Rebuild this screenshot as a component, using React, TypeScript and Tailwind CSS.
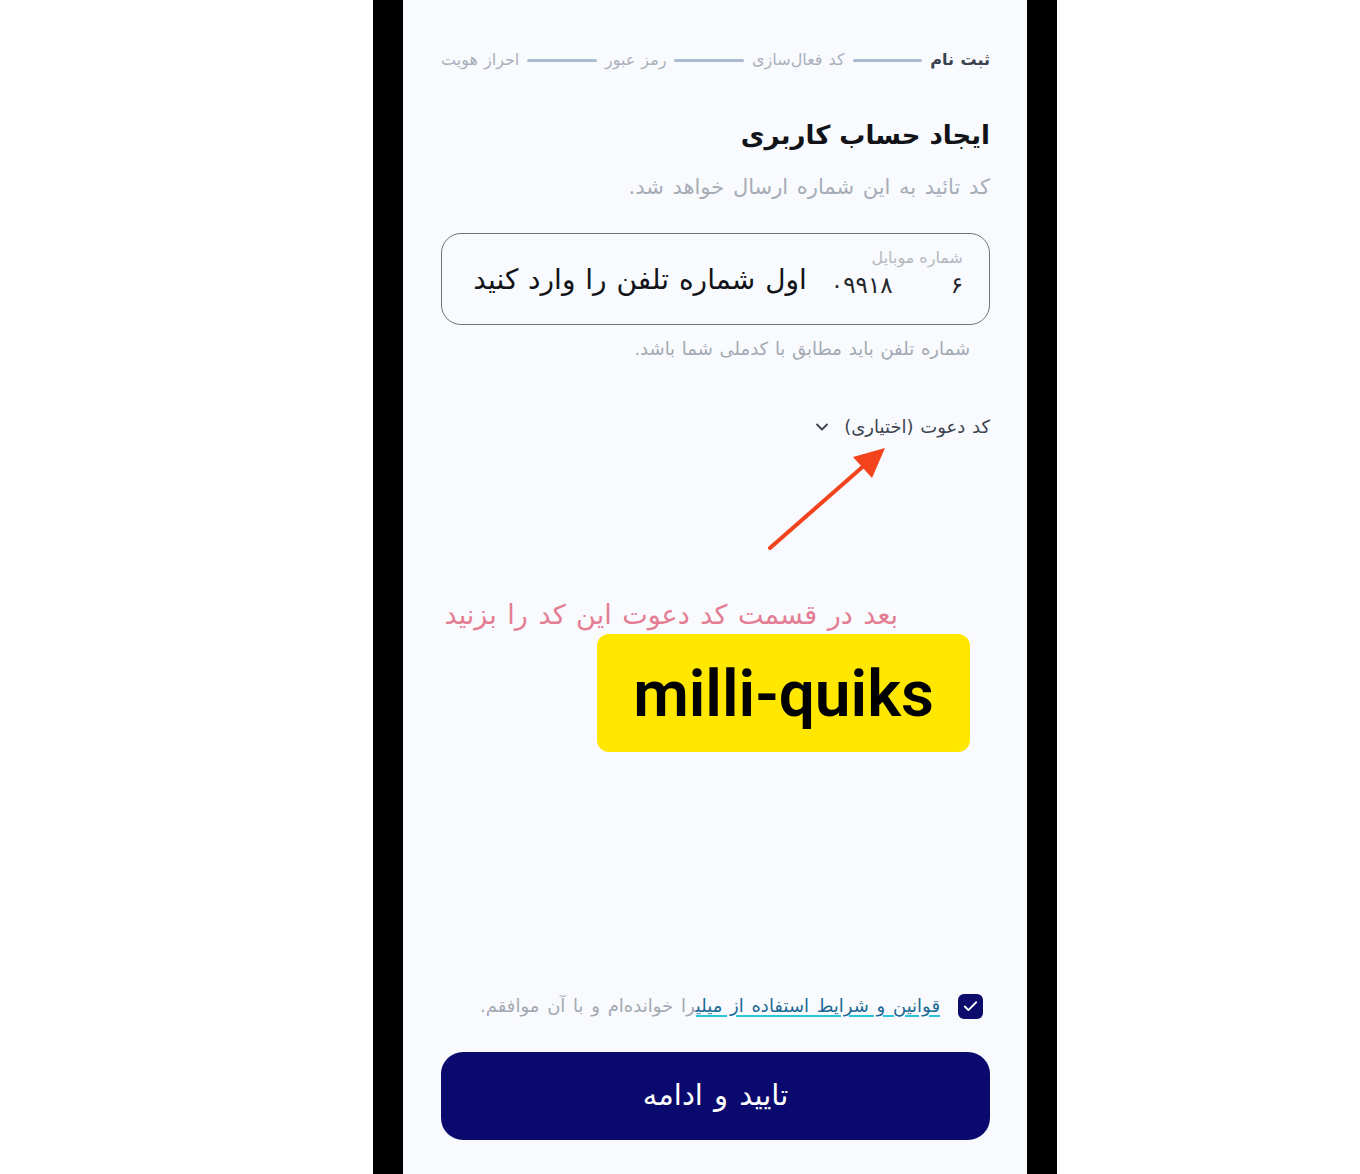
import React from 'react';
import { ChevronDown, Check } from 'lucide-react';

const steps = ['ثبت نام', 'کد فعال‌سازی', 'رمز عبور', 'احراز هویت'];

function Stepper() {
  return (
    <div className="flex items-center gap-[8px] h-[24px] text-[16px] leading-[24px] [word-spacing:1px]">
      {steps.map((s, i) => (
        <React.Fragment key={s}>
          <span className={i === 0 ? 'text-[#3a4250] font-semibold whitespace-nowrap' : 'text-[#a9b0bb] whitespace-nowrap'}>{s}</span>
          {i < steps.length - 1 && <span className="flex-1 h-[3px] rounded-full bg-[#a9bccf]" />}
        </React.Fragment>
      ))}
    </div>
  );
}

function Arrow() {
  return (
    <svg className="absolute left-[360px] top-[440px]" width="130" height="115" viewBox="0 0 130 115" fill="none">
      <line x1="7" y1="108" x2="104" y2="23" stroke="#f2431d" strokeWidth="4" strokeLinecap="round" />
      <polygon points="122,8 109,38 90,17" fill="#f2431d" />
    </svg>
  );
}

export default function App() {
  return (
    <div className="w-[1360px] h-[1174px] bg-white flex pl-[373px] overflow-hidden font-['DejaVu_Sans','Noto_Sans',sans-serif]">
      <div className="w-[684px] h-[1174px] border-x-[30px] border-black bg-[#f8fafd] relative">
        <div dir="rtl" className="flex flex-col pt-[48px] pr-[37px] pl-[38px]">
          <Stepper />

          <h1 className="mt-[43px] text-[26px] leading-[40px] font-bold text-[#111318]">ایجاد حساب کاربری</h1>
          <p className="mt-[18px] text-[21px] leading-[28px] text-[#a6adb7] [word-spacing:2px]">کد تائید به این شماره ارسال خواهد شد.</p>

          <div className="mt-[32px] h-[92px] rounded-[20px] border-[1.5px] border-[#6f747c] flex flex-col pr-[26px] pl-[30px] pt-[13px]">
            <span className="text-[16px] leading-[22px] text-[#b3b8c0]">شماره موبایل</span>
            <div className="flex items-center">
              <span className="text-[23px] leading-[32px] text-[#22252b]">۶</span>
              <span className="mr-[58px] text-[23px] leading-[32px] text-[#22252b] tracking-[2px]">۰۹۹۱۸</span>
              <span className="mr-[24px] text-[28px] leading-[32px] text-[#111318] whitespace-nowrap -mt-[10px] [word-spacing:1px]">اول شماره تلفن را وارد کنید</span>
            </div>
          </div>

          <p className="mt-[12px] pr-[20px] text-[18px] leading-[24px] text-[#a3a9b3] [word-spacing:1px]">شماره تلفن باید مطابق با کدملی شما باشد.</p>

          <div className="mt-[54px] flex items-center gap-[12px] h-[24px] text-[18px] leading-[24px] text-[#3d4552] [word-spacing:1px]">
            <span>کد دعوت (اختیاری)</span>
            <ChevronDown size={20} strokeWidth={2.2} className="text-[#3d4552]" />
          </div>

          <p className="mt-[158px] pr-[92px] text-[27px] leading-[36px] text-[#e47d93] whitespace-nowrap [word-spacing:2px]">بعد در قسمت کد دعوت این کد را بزنید</p>

          <div className="mt-[1px] mr-[20px] self-start w-[373px] h-[118px] rounded-[12px] bg-[#ffe700] flex items-center justify-center">
            <span dir="ltr" className="font-['Roboto',sans-serif] font-semibold text-[64px] leading-none text-black pt-[4px]">milli-quiks</span>
          </div>

          <div className="mt-[241px] flex items-center h-[26px] pr-[7px]">
            <span className="w-[25px] h-[25px] rounded-[6px] bg-[#0c0c6c] flex items-center justify-center shrink-0">
              <Check size={17} strokeWidth={2.6} className="text-white" />
            </span>
            <p className="mr-[18px] text-[18px] leading-[24px] text-[#a3a9b3] whitespace-nowrap [word-spacing:2px]">
              <span className="text-[#1c6a94] underline decoration-[#2cc4dc] decoration-[1.5px] underline-offset-[3px]">قوانین و شرایط استفاده از میلی</span>
              را خوانده‌ام و با آن موافقم.
            </p>
          </div>

          <button className="mt-[33px] h-[88px] rounded-[22px] bg-[#0a0a6e] text-white text-[29px] font-medium flex items-center justify-center [word-spacing:2px]">
            تایید و ادامه
          </button>
        </div>
        <Arrow />
      </div>
    </div>
  );
}
